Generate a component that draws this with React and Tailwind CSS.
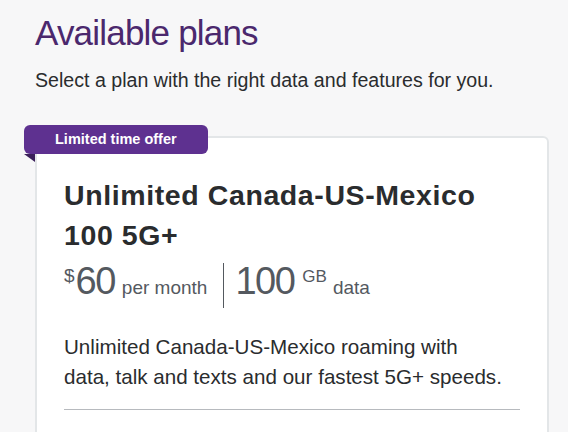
const App = () => {
  return (
    <div className="min-h-screen bg-[#f7f7f8] font-['Liberation_Sans',Arial,sans-serif] overflow-hidden">
      <div className="pl-[35px] pr-[19px] pt-[11px]">
        <h1 className="text-[35px] leading-[44px] tracking-[-0.8px] text-[#4b286d]">Available plans</h1>
        <p className="mt-[11px] text-[19.6px] leading-[28px] text-[#2a2c2e]">
          Select a plan with the right data and features for you.
        </p>

        <div className="relative mt-[42px] rounded-[6px] border-2 border-[#e3e6e8] bg-white px-[27px] pt-[37px] pb-[40px]">
          <div className="absolute left-[-13px] top-[-13px]">
            <div className="rounded-[6px] bg-[#5e3190] px-[31px] h-[29px] flex items-center text-[14.5px] font-bold text-white">
              Limited time offer
            </div>
            <div className="w-[11px] h-[8px] bg-[#3b1f5a] [clip-path:polygon(0_0,100%_0,100%_100%)]"></div>
          </div>

          <h2 className="text-[28.5px] leading-[40px] tracking-[0.6px] font-bold text-[#2a2c2e]">
            Unlimited Canada-US-Mexico
            <br />
            100 5G+
          </h2>

          <div className="mt-[8px] flex h-[45px] text-[#54595f]">
            <div className="flex items-baseline pr-[16px]">
              <span className="self-start mt-[3px] text-[19px] leading-none">$</span>
              <span className="ml-[1px] text-[38px] leading-[36px] tracking-[-1.5px] font-light">60</span>
              <span className="ml-[7px] text-[19px] leading-[24px]">per month</span>
            </div>
            <div className="w-px bg-[#54595f]"></div>
            <div className="flex items-baseline pl-[11px]">
              <span className="text-[38px] leading-[36px] tracking-[-1.5px] font-light">100</span>
              <span className="self-start ml-[8px] mt-[5px] text-[17px] leading-none">GB</span>
              <span className="ml-[6px] text-[19px] leading-[24px]">data</span>
            </div>
          </div>

          <p className="mt-[24px] text-[20.6px] leading-[30px] text-[#2a2c2e]">
            Unlimited Canada-US-Mexico roaming with
            <br />
            data, talk and texts and our fastest 5G+ speeds.
          </p>

          <div className="mt-[17px] h-px bg-[#b7babe]"></div>
        </div>
      </div>
    </div>
  )
}

export default App
